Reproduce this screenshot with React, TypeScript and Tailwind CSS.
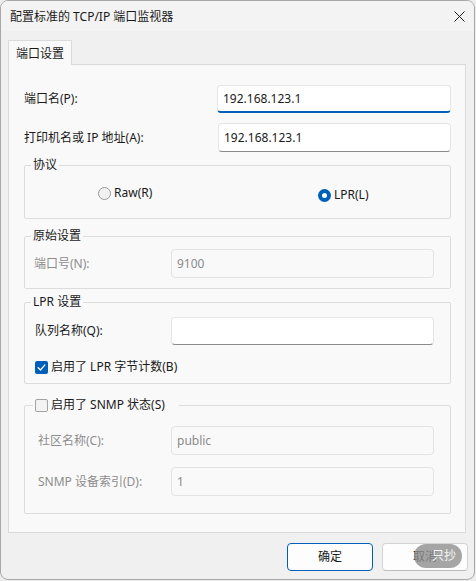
import React from "react";

const FONT = "font-['Noto_Sans','Noto_Sans_CJK_SC',sans-serif]";

function TextBox({
  value,
  width,
  height = 28,
  focused = false,
  disabled = false,
}: {
  value: string;
  width: string;
  height?: number;
  focused?: boolean;
  disabled?: boolean;
}) {
  const base =
    "flex items-center rounded-[4px] border px-[5px] text-[12px] leading-[16px] box-border";
  const look = disabled
    ? "bg-[#f9f9f9] border-[#e3e3e3] text-[#8a8a8a]"
    : focused
    ? "bg-white border-[#e5e5e5] border-b-[2px] border-b-[#005fb8] text-[#1a1a1a]"
    : "bg-white border-[#e5e5e5] border-b-[#8a8a8a] text-[#1a1a1a]";
  return (
    <div className={`${base} ${look} ${width}`} style={{ height }}>
      {value}
    </div>
  );
}

function Radio({ checked, label }: { checked: boolean; label: string }) {
  return (
    <div className="flex items-center gap-[3px] h-[16px]">
      {checked ? (
        <span className="w-[13px] h-[13px] rounded-full bg-[#005fb8] flex items-center justify-center">
          <span className="w-[5px] h-[5px] rounded-full bg-white" />
        </span>
      ) : (
        <span className="w-[13px] h-[13px] rounded-full border border-[#9a9a9a] bg-[#f1f1f1] box-border" />
      )}
      <span className="text-[12px] leading-[16px] text-[#1a1a1a]">{label}</span>
    </div>
  );
}

function CheckBox({ checked, label }: { checked: boolean; label: string }) {
  return (
    <div className="flex items-center gap-[3px] h-[16px]">
      {checked ? (
        <span className="w-[13px] h-[13px] rounded-[2px] bg-[#005fb8] flex items-center justify-center">
          <svg width="9" height="9" viewBox="0 0 9 9" fill="none">
            <path d="M1.2 4.8 L3.5 7 L7.9 1.9" stroke="white" strokeWidth="1.3" strokeLinecap="round" strokeLinejoin="round" />
          </svg>
        </span>
      ) : (
        <span className="w-[13px] h-[13px] rounded-[2px] border border-[#a3a3a3] bg-[#f3f3f3] box-border" />
      )}
      <span className="text-[12px] leading-[16px] text-[#1a1a1a]">{label}</span>
    </div>
  );
}

function FieldRow({
  label,
  value,
  disabled = false,
  labelPad,
  height = 29,
  className = "",
}: {
  label: string;
  value: string;
  disabled?: boolean;
  labelPad: string;
  height?: number;
  className?: string;
}) {
  return (
    <div className={`flex items-center justify-between pr-[16px] ${labelPad} ${className}`}>
      <span className={`text-[12px] leading-[16px] ${disabled ? "text-[#8d8d8d]" : "text-[#1a1a1a]"}`}>
        {label}
      </span>
      <TextBox value={value} width="w-[263px]" height={height} disabled={disabled} />
    </div>
  );
}

export default function App() {
  return (
    <div className={`w-[476px] h-[581px] bg-[#ededed] ${FONT}`}>
      <div className="relative w-[475px] h-[580px] rounded-[8px] border border-[#a8a8a8] bg-[#f0f0f0] flex flex-col overflow-hidden box-border">
        {/* title bar */}
        <div className="h-[30px] flex items-center justify-between pl-[9px] pr-[8px] bg-[#f3f3f3]">
          <span className="text-[12px] leading-[16px] text-[#1a1a1a] pt-[1px]">配置标准的 TCP/IP 端口监视器</span>
          <svg width="11" height="11" viewBox="0 0 11 11" className="mr-[1px]">
            <path d="M0.5 0.5 L10.5 10.5 M10.5 0.5 L0.5 10.5" stroke="#1a1a1a" strokeWidth="1" />
          </svg>
        </div>

        {/* tab strip */}
        <div className="mt-[9px] ml-[7px] flex">
          <div className="relative z-10 -mb-px h-[25px] w-[64px] border border-b-0 border-[#dadada] bg-[#f9f9f9] flex items-center justify-center box-border">
            <span className="text-[12px] leading-[16px] text-[#1a1a1a] pt-[1px]">端口设置</span>
          </div>
        </div>

        {/* tab page */}
        <div className="ml-[7px] mr-[8px] border border-[#dadada] bg-[#f9f9f9] pt-[20px] pl-[15px] pr-[14px] pb-[18px] flex flex-col">
          <div className="flex items-center justify-between">
            <span className="text-[12px] leading-[16px] text-[#1a1a1a]">端口名(P):</span>
            <TextBox value="192.168.123.1" width="w-[234px]" height={28} focused />
          </div>
          <div className="mt-[10px] flex items-center justify-between">
            <span className="text-[12px] leading-[16px] text-[#1a1a1a]">打印机名或 IP 地址(A):</span>
            <TextBox value="192.168.123.1" width="w-[233px]" height={29} />
          </div>

          {/* protocol */}
          <fieldset className="mt-[5px] border border-[#dcdcdc] rounded-[2px] p-0 pb-[15px] min-w-0">
            <legend className="ml-[6px] px-[2px] text-[12px] leading-[16px] text-[#1a1a1a]">协议</legend>
            <div className="mt-[12px] flex pl-[73px]">
              <div className="w-[220px]">
                <Radio checked={false} label="Raw(R)" />
              </div>
              <div className="mt-[2px]">
                <Radio checked label="LPR(L)" />
              </div>
            </div>
          </fieldset>

          {/* raw settings */}
          <fieldset className="mt-[9px] border border-[#dcdcdc] rounded-[2px] p-0 pb-[10px] min-w-0">
            <legend className="ml-[6px] px-[2px] text-[12px] leading-[16px] text-[#1a1a1a]">原始设置</legend>
            <FieldRow className="mt-[5px]" labelPad="pl-[9px]" label="端口号(N):" value="9100" disabled />
          </fieldset>

          {/* LPR settings */}
          <fieldset className="mt-[5px] border border-[#dcdcdc] rounded-[2px] p-0 pb-[8px] min-w-0">
            <legend className="ml-[6px] px-[2px] text-[12px] leading-[16px] text-[#1a1a1a]">LPR 设置</legend>
            <div className="mt-[7px] flex items-center justify-between pl-[10px] pr-[16px]">
              <span className="text-[12px] leading-[16px] text-[#1a1a1a]">队列名称(Q):</span>
              <TextBox value="" width="w-[263px]" height={28} />
            </div>
            <div className="mt-[14px] pl-[10px]">
              <CheckBox checked label="启用了 LPR 字节计数(B)" />
            </div>
          </fieldset>

          {/* SNMP */}
          <fieldset className="mt-[13px] border border-[#dcdcdc] rounded-[2px] p-0 pb-[17px] min-w-0">
            <legend className="ml-[8px] pl-[2px] pr-[14px]">
              <CheckBox checked={false} label="启用了 SNMP 状态(S)" />
            </legend>
            <FieldRow className="mt-[13px]" labelPad="pl-[13px]" label="社区名称(C):" value="public" disabled />
            <FieldRow className="mt-[12px]" labelPad="pl-[13px]" label="SNMP 设备索引(D):" value="1" disabled />
          </fieldset>
        </div>

        {/* dialog buttons */}
        <div className="mt-[10px] flex justify-end gap-[9px] pr-[6px]">
          <button className="w-[86px] h-[28px] rounded-[4px] border border-[#005fb8] bg-[#fdfdfd] text-[12px] leading-[16px] text-[#1a1a1a]">
            确定
          </button>
          <button className="w-[86px] h-[28px] rounded-[4px] border border-[#d3d3d3] border-b-[#bdbdbd] bg-[#fdfdfd] text-[12px] leading-[16px] text-[#1a1a1a]">
            取消
          </button>
        </div>

        {/* floating badge over the cancel button */}
        <div className="absolute left-[413px] top-[543px] w-[48px] h-[24px] rounded-full bg-[#8f8f8f]/80 flex items-center justify-end pr-[6px] gap-[2px]">
          <span className="text-[12px] leading-[16px] text-[#f4f4f4]">只抄</span>
        </div>
      </div>
    </div>
  );
}
